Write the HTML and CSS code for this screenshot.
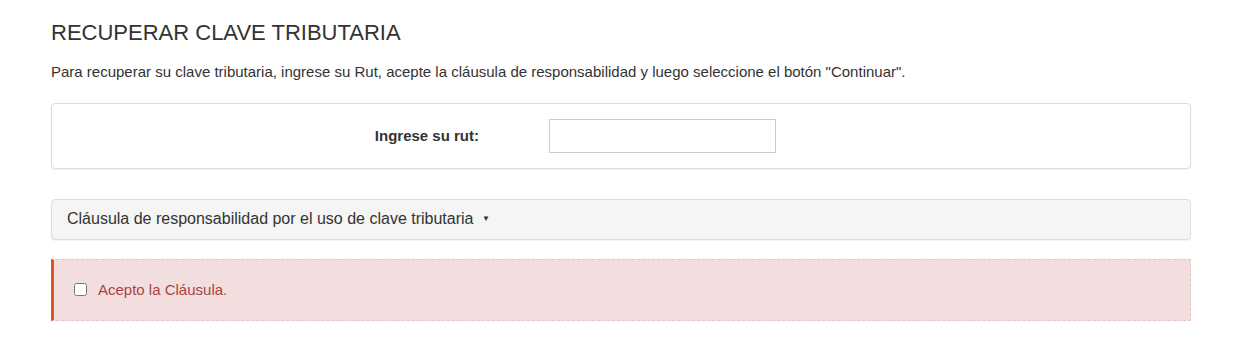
FILE: index.html
```html
<!DOCTYPE html>
<html lang="es">
<head>
<meta charset="utf-8">
<title>Recuperar clave tributaria</title>
<link rel="stylesheet" href="styles.css">
</head>
<body>
<div class="container">
  <h1 class="title">RECUPERAR CLAVE TRIBUTARIA</h1>
  <p class="intro">Para recuperar su clave tributaria, ingrese su Rut, acepte la cláusula de responsabilidad y luego seleccione el botón "Continuar".</p>

  <div class="panel">
    <div class="panel-body form-row">
      <label class="form-label" for="rut">Ingrese su rut:</label>
      <input class="form-input" id="rut" type="text">
    </div>
  </div>

  <div class="panel panel-collapse">
    <div class="panel-heading">Cláusula de responsabilidad por el uso de clave tributaria <span class="caret">▼</span></div>
  </div>

  <div class="alert">
    <label class="check"><input type="checkbox" class="check-box"><span>Acepto la Cláusula.</span></label>
  </div>
</div>
</body>
</html>
```

FILE: styles.css
```css
* { box-sizing: border-box; }
body {
  margin: 0;
  background: #fff;
  font-family: "Liberation Sans", Arial, sans-serif;
  color: #333;
  font-size: 15px;
  line-height: 21px;
}
.container {
  width: 1140px;
  margin-left: 51px;
  padding-top: 20px;
}
.title {
  margin: 0;
  font-size: 22px;
  font-weight: normal;
  line-height: 26px;
  color: #333;
}
.intro {
  margin: 15px 0 21px;
}
.panel {
  border: 1px solid #ddd;
  border-radius: 4px;
  background: #fff;
  box-shadow: 0 1px 1px rgba(0,0,0,0.05);
  margin-bottom: 30px;
}
.panel-body {
  padding: 15px;
}
.form-row {
  display: flex;
  align-items: center;
}
.form-label {
  width: 412px;
  text-align: right;
  font-weight: bold;
  padding-bottom: 1px;
}
.form-input {
  margin-left: 70px;
  width: 227px;
  height: 34px;
  border: 1px solid #ccc;
  border-radius: 0;
  padding: 6px 12px;
  font: inherit;
}
.panel-collapse {
  margin-bottom: 19px;
  background: #f5f5f5;
}
.panel-heading {
  padding: 9px 15px;
  font-size: 16px;
  line-height: 20px;
  color: #333;
}
.caret {
  font-size: 8px;
  vertical-align: middle;
  margin-left: 4px;
  position: relative;
  top: -1px;
}
.alert {
  background: #f2dede;
  border: 1px dashed #e3c6c6;
  border-left: 3px solid #e0541c;
  height: 62px;
  display: flex;
  align-items: center;
  padding-left: 20px;
}
.check {
  display: flex;
  align-items: center;
  color: #a94442;
  font-size: 15px;
}
.check-box {
  margin: 0 11px 0 0;
  width: 13px;
  height: 13px;
}
```
